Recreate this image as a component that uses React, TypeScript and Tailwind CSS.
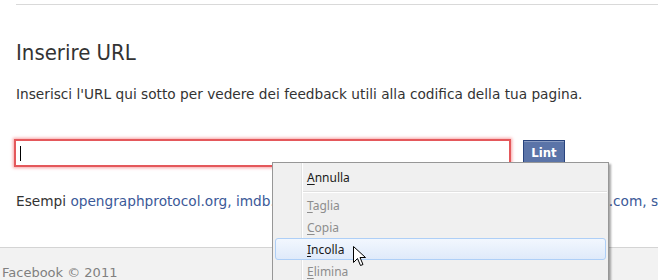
import React from "react";

const tahoma = "font-['Tahoma','DejaVu_Sans','Liberation_Sans',sans-serif]";

function Item({
  label,
  disabled,
  active,
}: {
  label: string;
  disabled?: boolean;
  active?: boolean;
}) {
  const ch = label.slice(0, 1);
  const after = label.slice(1);
  return (
    <div className="relative h-[22px] flex items-center">
      {active && (
        <div className="absolute inset-x-[2px] top-[-1px] h-[22px] rounded-[3px] border border-[#aecff7] bg-gradient-to-b from-[#f2f7fe] to-[#dfeafa]" />
      )}
      <span
        className={`relative pl-[34px] text-[12px] leading-none ${
          disabled ? "text-[#8d8d8d]" : "text-[#1a1a1a]"
        }`}
      >
        <span className="underline underline-offset-2">{ch}</span>
        {after}
      </span>
    </div>
  );
}

export default function App() {
  return (
    <div
      className={`relative w-[658px] h-[280px] overflow-hidden bg-white ${tahoma}`}
    >
      <div className="h-[247px] pl-4 pt-1 flex flex-col">
        <div className="border-t border-[#d9d9d9]" />
        <h1 className="mt-[34px] leading-[28px] text-[#333] font-['Tahoma','DejaVu_Sans_Condensed',sans-serif] text-[22px]">
          Inserire URL
        </h1>
        <p className="mt-[18px] text-[13.7px] leading-[18px] text-[#333] whitespace-nowrap">
          Inserisci l'URL qui sotto per vedere dei feedback utili alla codifica
          della tua pagina.
        </p>
        <div className="mt-[36px] flex items-start gap-[12px]">
          <div className="ml-[-2px] w-[497px] h-[28px] border-2 border-[#e4585b] shadow-[0_0_3px_1px_#f7a3a5] bg-white flex items-center pl-[4px]">
            <div className="w-px h-[15px] bg-black" />
          </div>
          <button className="mt-[1px] w-[42px] h-[24px] bg-[#5b74a8] border border-[#29447e] shadow-[inset_0_1px_0_#8a9cc2] text-white font-bold text-[13px] leading-none font-['Tahoma','DejaVu_Sans_Condensed',sans-serif]">
            Lint
          </button>
        </div>
        <p className="mt-[25px] text-[13.7px] leading-[18px] text-[#333] whitespace-nowrap">
          Esempi{" "}
          <span className="text-[#3b5998]">
            opengraphprotocol.org, imdb.com, rottentomatoes.com, nytimes.com,
            latimes.com, seatgeek.com
          </span>
        </p>
      </div>
      <div className="h-[33px] border-t border-[#d4d4d4] bg-[#f2f2f2] pl-[2px] pt-[18px] text-[13px] leading-none text-[#808080]">
        Facebook © 2011
      </div>

      <div className="absolute left-[272px] top-[162px] w-[337px] h-[130px] border border-[#979797] bg-[#f0f0f0] shadow-[2px_2px_2px_rgba(0,0,0,0.35)] pt-[4px] flex flex-col font-['Noto_Sans','Segoe_UI',sans-serif]">
        <div className="absolute left-[28px] inset-y-0 w-px bg-[#e2e3e3]" />
        <div className="absolute left-[29px] inset-y-0 w-px bg-white" />
        <Item label="Annulla" />
        <div className="h-[6px] pl-[30px] pr-px pt-[2px] flex flex-col">
          <div className="h-px bg-[#e0e0e0]" />
          <div className="h-px bg-white" />
        </div>
        <Item label="Taglia" disabled />
        <Item label="Copia" disabled />
        <Item label="Incolla" active />
        <Item label="Elimina" disabled />
      </div>

      <svg
        className="absolute left-[353px] top-[246px]"
        width="14"
        height="23"
        viewBox="0 0 14 23"
      >
        <path
          d="M0.5 0.5 L0.5 16.5 L4.5 12.5 L7.5 19.5 L10 18.5 L7 11.5 L12.5 11.5 Z"
          fill="white"
          stroke="black"
          strokeWidth="1"
        />
      </svg>
    </div>
  );
}
